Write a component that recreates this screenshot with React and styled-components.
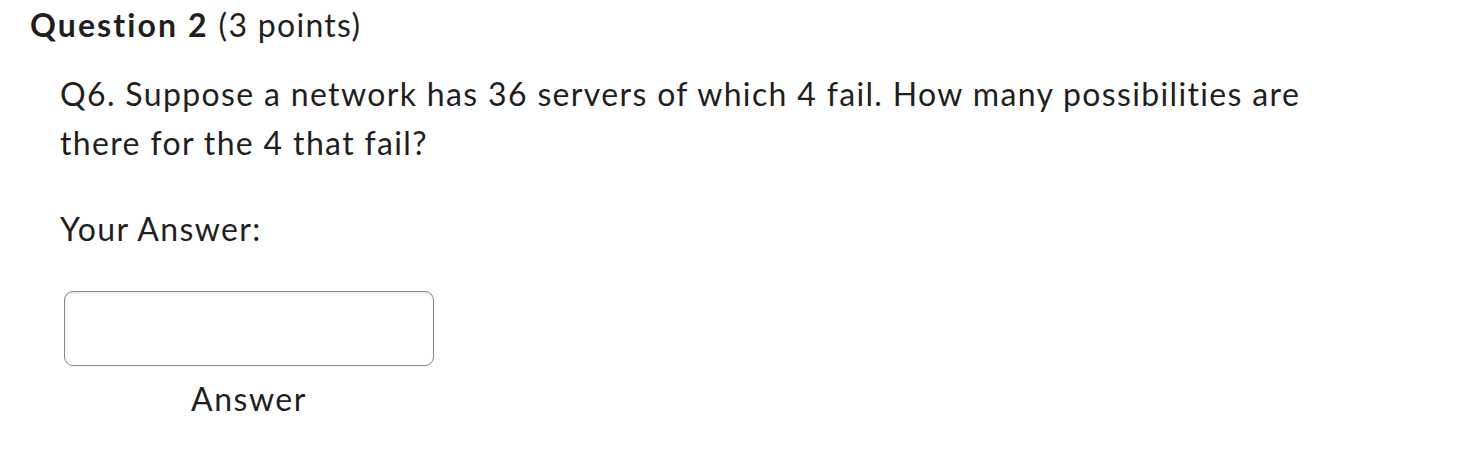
import React from 'react';
import styled, { createGlobalStyle } from 'styled-components';

const GlobalStyle = createGlobalStyle`
  body {
    margin: 0;
    background: #ffffff;
    font-family: Lato, "Liberation Sans", sans-serif;
    color: #1f1f1f;
  }
`;

const Page = styled.div`
  padding: 5px 30px 0 30px;
`;

const Title = styled.h2`
  margin: 0;
  font-size: 32px;
  font-weight: 700;
  line-height: 40px;
  letter-spacing: 2.1px;
  color: #1f1f1f;

  span {
    font-weight: 400;
    letter-spacing: 1.3px;
  }
`;

const Body = styled.div`
  padding: 24px 0 0 30px;
`;

const Prompt = styled.p`
  margin: 0;
  max-width: 1300px;
  font-size: 32px;
  line-height: 49px;
  letter-spacing: 1.35px;
`;

const Label = styled.p`
  margin: 37px 0 0 0;
  font-size: 32px;
  line-height: 49px;
  letter-spacing: 1.35px;
`;

const Field = styled.label`
  display: flex;
  flex-direction: column;
  align-items: center;
  width: 370px;
  margin: 38px 0 0 4px;
`;

const Input = styled.input`
  box-sizing: border-box;
  width: 370px;
  height: 75px;
  border: 1px solid #858585;
  border-radius: 9px;
  box-shadow: inset 0 2px 2px rgba(0, 0, 0, 0.07);
  background: #fff;
  font-family: inherit;
  font-size: 28px;
  padding: 0 14px;
  outline: none;
`;

const Caption = styled.span`
  margin-top: 11px;
  font-size: 32px;
  line-height: 44px;
  letter-spacing: 1.5px;
`;

export default function App() {
  return (
    <>
      <GlobalStyle />
      <Page>
        <Title>
          Question 2 <span>(3 points)</span>
        </Title>
        <Body>
          <Prompt>
            Q6. Suppose a network has 36 servers of which 4 fail. How many possibilities are there for the 4 that fail?
          </Prompt>
          <Label>Your Answer:</Label>
          <Field>
            <Input type="text" aria-label="Answer" />
            <Caption>Answer</Caption>
          </Field>
        </Body>
      </Page>
    </>
  );
}
